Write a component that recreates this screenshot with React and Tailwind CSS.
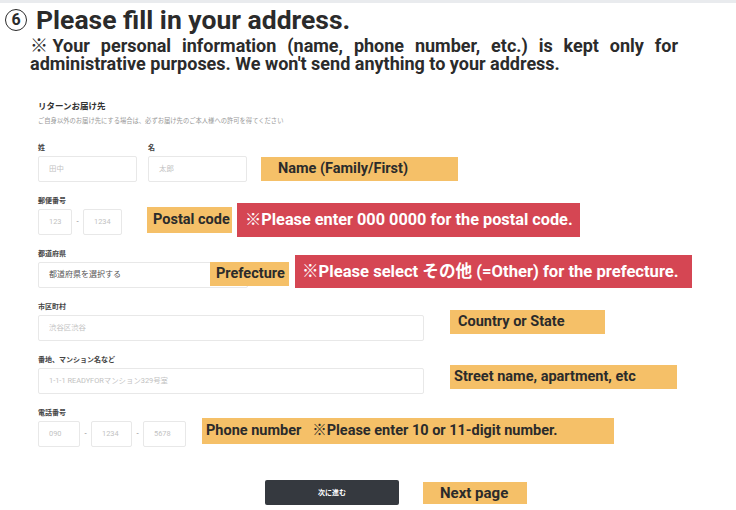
const JP = "font-['Noto_Sans_CJK_JP','Noto_Sans',sans-serif]";
const RJ = "font-['Roboto','Noto_Sans_CJK_JP',sans-serif]";

function Input({ w, text, dark }) {
  return (
    <div
      className={`h-[26px] border border-[#e8e8e8] rounded-[2px] bg-white flex items-center pl-[10px] shrink-0 ${RJ} text-[7.4px] ${dark ? "text-[#555] text-[8px]" : "text-[#c2c2c2]"}`}
      style={{ width: w }}
    >
      {text}
    </div>
  );
}

function Label({ children }) {
  return (
    <div className={`h-[10px] leading-[10px] mb-[4px] text-[7px] font-bold text-[#444] ${JP}`}>{children}</div>
  );
}

function Dash() {
  return <div className="w-[11px] shrink-0 text-center text-[8px] leading-[26px] text-[#888]">-</div>;
}

export default function App() {
  return (
    <div className="w-[736px] h-[510px] bg-white overflow-hidden text-[#2b2b2b] font-['Roboto','Noto_Sans_CJK_JP',sans-serif]">
      <div className="h-[3px] bg-[#e9ebee]" />
      {/* Heading */}
      <div className="flex items-center pl-[5px] h-[31px] pt-[3px]">
        <span className="w-[22px] h-[22px] rounded-full border-[1.5px] border-[#2b2b2b] flex items-center justify-center text-[16px] font-bold leading-none shrink-0">
          6
        </span>
        <span className="ml-[9px] text-[26.5px] font-bold leading-none whitespace-nowrap">
          Please fill in your address.
        </span>
      </div>
      {/* Subtitle */}
      <p className="ml-[30px] mt-[3px] w-[648px] text-[18px] font-bold leading-[18px] text-justify">
        <span className="inline-block align-top whitespace-pre">{"※ Your"}</span>{" "}
        personal information (name, phone number, etc.) is kept only for administrative purposes. We won't send anything to your address.
      </p>

      {/* Form */}
      <div className="pl-[38px] mt-[26px]">
        <div className={`h-[12px] leading-[12px] text-[8.5px] font-bold text-[#333] ${JP}`}>リターンお届け先</div>
        <div className={`mt-[6px] h-[8px] leading-[8px] text-[6.3px] text-[#999] ${JP}`}>
          ご自身以外のお届け先にする場合は、必ずお届け先のご本人様への許可を得てください
        </div>

        {/* Name */}
        <div className="mt-[17px] flex">
          <div className="w-[99px]">
            <Label>姓</Label>
            <Input w="99px" text="田中" />
          </div>
          <div className="w-[99px] ml-[11px]">
            <Label>名</Label>
            <div className="flex h-[26px] items-start">
              <Input w="99px" text="太郎" />
              <div className="ml-[14px] mt-[1px] h-[24px] w-[197px] shrink-0 bg-[#f5c068] pl-[17px] text-[14.5px] font-bold leading-[24px] whitespace-nowrap">
                Name (Family/First)
              </div>
            </div>
          </div>
        </div>

        {/* Postal */}
        <div className="mt-[13px]">
          <Label>郵便番号</Label>
          <div className="flex h-[26px] items-start">
            <Input w="34px" text="123" />
            <Dash />
            <Input w="39px" text="1234" />
            <div className="ml-[25px] -mt-[2px] h-[26px] w-[85px] shrink-0 bg-[#f5c068] pl-[6px] text-[14.5px] font-bold leading-[26px] whitespace-nowrap">
              Postal code
            </div>
            <div className="ml-[5px] -mt-[6px] h-[34px] w-[343px] shrink-0 bg-[#d54653] pl-[8px] text-[16.3px] font-bold leading-[34px] text-white whitespace-nowrap">
              ※Please enter 000 0000 for the postal code.
            </div>
          </div>
        </div>

        {/* Prefecture */}
        <div className="mt-[13px]">
          <Label>都道府県</Label>
          <div className="flex h-[26px] items-start">
            <Input w="210px" text="都道府県を選択する" dark />
            <div className="-ml-[38px] h-[24px] w-[79px] shrink-0 bg-[#f5c068] pl-[6px] text-[14.5px] font-bold leading-[24px] whitespace-nowrap">
              Prefecture
            </div>
            <div className="ml-[6px] -mt-[7px] h-[33px] w-[397px] shrink-0 bg-[#d54653] pl-[7px] text-[16.6px] font-bold leading-[33px] text-white whitespace-nowrap">
              ※Please select その他 (=Other) for the prefecture.
            </div>
          </div>
        </div>

        {/* City */}
        <div className="mt-[13px]">
          <Label>市区町村</Label>
          <div className="flex h-[26px] items-start">
            <Input w="386px" text="渋谷区渋谷" />
            <div className="ml-[26px] -mt-[5px] h-[24px] w-[155px] shrink-0 bg-[#f5c068] pl-[8px] text-[14.5px] font-bold leading-[24px] whitespace-nowrap">
              Country or State
            </div>
          </div>
        </div>

        {/* Street */}
        <div className="mt-[13px]">
          <Label>番地、マンション名など</Label>
          <div className="flex h-[26px] items-start">
            <Input w="386px" text="1-1-1 READYFORマンション329号室" />
            <div className="ml-[26px] -mt-[3px] h-[24px] w-[227px] shrink-0 bg-[#f5c068] pl-[4px] text-[14.5px] font-bold leading-[24px] whitespace-nowrap">
              Street name, apartment, etc
            </div>
          </div>
        </div>

        {/* Phone */}
        <div className="mt-[13px]">
          <Label>電話番号</Label>
          <div className="flex h-[26px] items-start">
            <Input w="42px" text="090" />
            <Dash />
            <Input w="41px" text="1234" />
            <Dash />
            <Input w="43px" text="5678" />
            <div className="ml-[16px] -mt-[3px] h-[26px] w-[412px] shrink-0 bg-[#f5c068] pl-[4px] text-[14.5px] font-bold leading-[26px] whitespace-pre">
              {"Phone number   ※Please enter 10 or 11-digit number."}
            </div>
          </div>
        </div>

        {/* Button */}
        <div className="mt-[33px] flex h-[25px] items-start pl-[227px]">
          <div className={`h-[25px] w-[134px] shrink-0 rounded-[2px] bg-[#35393f] flex items-center justify-center text-white text-[7px] font-bold ${JP}`}>
            次に進む
          </div>
          <div className="ml-[24px] mt-[2px] h-[22px] w-[104px] shrink-0 bg-[#f5c068] pl-[17px] text-[15px] font-bold leading-[22px] whitespace-nowrap">
            Next page
          </div>
        </div>
      </div>
    </div>
  );
}
